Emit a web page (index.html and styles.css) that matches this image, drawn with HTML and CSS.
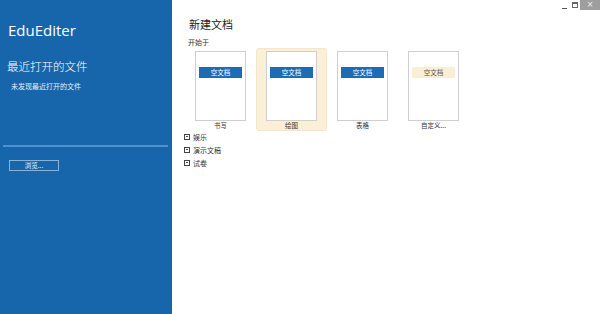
FILE: index.html
```html
<!DOCTYPE html>
<html lang="zh">
<head>
<meta charset="utf-8">
<title>EduEditer</title>
<link rel="stylesheet" href="styles.css">
</head>
<body>
<div class="app">
  <aside class="sidebar">
    <div class="brand">EduEditer</div>
    <div class="recent-title">最近打开的文件</div>
    <div class="recent-empty">未发现最近打开的文件</div>
    <div class="spacer"></div>
    <div class="divider"></div>
    <div class="browse-row"><button class="browse">浏览...</button></div>
  </aside>
  <main class="main">
    <div class="titlebar">
      <span class="ctrl min"><span class="min-line"></span></span>
      <span class="ctrl restore"><span class="restore-box"></span></span>
      <span class="ctrl close">×</span>
    </div>
    <div class="content">
      <h1 class="heading">新建文档</h1>
      <div class="sub">开始于</div>
      <div class="cards">
        <div class="card">
          <div class="page"><div class="bar">空文档</div></div>
          <div class="label">书写</div>
        </div>
        <div class="card selected">
          <div class="page"><div class="bar">空文档</div></div>
          <div class="label">绘图</div>
        </div>
        <div class="card">
          <div class="page"><div class="bar">空文档</div></div>
          <div class="label">表格</div>
        </div>
        <div class="card">
          <div class="page"><div class="bar light">空文档</div></div>
          <div class="label">自定义...</div>
        </div>
      </div>
      <ul class="groups">
        <li><span class="box"></span>娱乐</li>
        <li><span class="box"></span>演示文稿</li>
        <li><span class="box"></span>试卷</li>
      </ul>
    </div>
  </main>
</div>
</body>
</html>
```
FILE: styles.css
```css
* { box-sizing: border-box; }
html, body { margin: 0; padding: 0; }
body {
  width: 600px;
  height: 314px;
  overflow: hidden;
  background: #ffffff;
  font-family: "Noto Sans", "Noto Sans CJK SC", sans-serif;
}
.app { display: flex; height: 314px; }
.sidebar {
  width: 172px;
  flex: none;
  background: #1766ac;
  color: #ffffff;
  display: flex;
  flex-direction: column;
  padding: 0 4px 0 3px;
}
.brand {
  margin: 20px 0 0 5px;
  font-family: "Open Sans", "Liberation Sans", sans-serif;
  font-size: 15px;
  line-height: 20px;
}
.recent-title {
  margin: 18px 0 0 4px;
  font-family: "Noto Sans CJK SC", sans-serif;
  font-weight: 300;
  font-size: 11.5px;
  line-height: 16px;
}
.recent-empty {
  margin: 7px 0 0 8px;
  font-family: "Noto Sans CJK SC", sans-serif;
  font-size: 7px;
  line-height: 10px;
  color: #e3eef8;
}
.spacer { height: 54px; }
.divider { height: 2px; background: #5290c7; }
.browse-row { padding: 4px 0 0 6px; }
.browse {
  width: 50px;
  height: 11px;
  padding: 0;
  border: 1px solid #8ab3da;
  background: #1766ac;
  color: #e8f1fa;
  font-family: "Noto Sans CJK SC", sans-serif;
  font-size: 6.5px;
  line-height: 9px;
}
.main { flex: 1; display: flex; flex-direction: column; }
.titlebar { display: flex; justify-content: flex-end; height: 11px; }
.ctrl { display: flex; align-items: center; justify-content: center; }
.min { width: 10px; }
.min-line { width: 5px; height: 1px; background: #555; margin-top: 5px; }
.restore { width: 11px; }
.restore-box { width: 6px; height: 6px; border: 1px solid #666; border-top-width: 2px; margin-top: -1px; }
.close {
  width: 20px;
  height: 10px;
  background: #9e9e9e;
  color: #f4f4f4;
  font-family: "DejaVu Sans", sans-serif;
  font-size: 8px;
  line-height: 10px;
}
.content { padding: 6px 0 0 12px; }
.heading {
  margin: 0 0 0 5px;
  font-weight: normal;
  font-size: 11px;
  line-height: 14px;
  color: #222;
  font-family: "Noto Sans CJK SC", sans-serif;
}
.sub {
  margin: 7px 0 0 4px;
  font-size: 7px;
  line-height: 9px;
  color: #333;
  font-family: "Noto Sans CJK SC", sans-serif;
}
.cards { display: flex; margin: 1px 0 0 1px; }
.card {
  width: 71px;
  height: 83px;
  padding-top: 2px;
  display: flex;
  flex-direction: column;
  align-items: center;
  border: 1px solid transparent;
  border-radius: 3px;
}
.card.selected { background: #fbf0d7; border-color: #f4e6c6; }
.page {
  width: 51px;
  height: 71px;
  background: #ffffff;
  border: 1px solid #cfcfcf;
  padding: 15px 3px 0;
}
.bar {
  height: 11px;
  background: #1b6cb5;
  color: #ffffff;
  font-size: 6.5px;
  line-height: 11px;
  text-align: center;
  font-family: "Noto Sans CJK SC", sans-serif;
}
.bar.light { background: #faefd6; color: #555; }
.label {
  margin-top: 0;
  font-size: 6.5px;
  line-height: 9px;
  color: #333;
  font-family: "Noto Sans CJK SC", sans-serif;
}
.groups {
  list-style: none;
  margin: -1px 0 0 0;
  padding: 0;
}
.groups li {
  display: flex;
  align-items: center;
  height: 13px;
  font-size: 7px;
  color: #333;
  font-family: "Noto Sans CJK SC", sans-serif;
}
.box {
  width: 6px;
  height: 6px;
  border: 1px solid #444;
  margin-right: 3px;
  display: flex;
  align-items: center;
  justify-content: center;
}
.box::after { content: ""; width: 2px; height: 1px; background: #444; }
```
